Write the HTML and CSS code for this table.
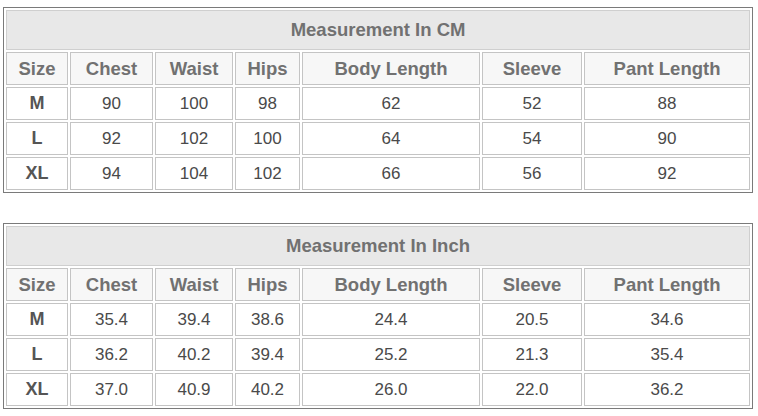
FILE: index.html
```html
<!DOCTYPE html>
<html>
<head>
<meta charset="utf-8">
<link rel="stylesheet" href="styles.css">
</head>
<body>
<div class="page">
<table class="size-table">
  <colgroup>
    <col class="c-size"><col class="c-chest"><col class="c-waist"><col class="c-hips"><col class="c-body"><col class="c-sleeve"><col class="c-pant">
  </colgroup>
  <tr><th class="title" colspan="7">Measurement In CM</th></tr>
  <tr class="head"><th>Size</th><th>Chest</th><th>Waist</th><th>Hips</th><th>Body Length</th><th>Sleeve</th><th>Pant Length</th></tr>
  <tr><th class="sz">M</th><td>90</td><td>100</td><td>98</td><td>62</td><td>52</td><td>88</td></tr>
  <tr><th class="sz">L</th><td>92</td><td>102</td><td>100</td><td>64</td><td>54</td><td>90</td></tr>
  <tr><th class="sz">XL</th><td>94</td><td>104</td><td>102</td><td>66</td><td>56</td><td>92</td></tr>
</table>
<table class="size-table">
  <colgroup>
    <col class="c-size"><col class="c-chest"><col class="c-waist"><col class="c-hips"><col class="c-body"><col class="c-sleeve"><col class="c-pant">
  </colgroup>
  <tr><th class="title" colspan="7">Measurement In Inch</th></tr>
  <tr class="head"><th>Size</th><th>Chest</th><th>Waist</th><th>Hips</th><th>Body Length</th><th>Sleeve</th><th>Pant Length</th></tr>
  <tr><th class="sz">M</th><td>35.4</td><td>39.4</td><td>38.6</td><td>24.4</td><td>20.5</td><td>34.6</td></tr>
  <tr><th class="sz">L</th><td>36.2</td><td>40.2</td><td>39.4</td><td>25.2</td><td>21.3</td><td>35.4</td></tr>
  <tr><th class="sz">XL</th><td>37.0</td><td>40.9</td><td>40.2</td><td>26.0</td><td>22.0</td><td>36.2</td></tr>
</table>
</div>
</body>
</html>
```
FILE: styles.css
```css
html, body {
  margin: 0;
  padding: 0;
  background: #ffffff;
}
.page {
  padding: 7px 0 0 3px;
  display: flex;
  flex-direction: column;
  gap: 30px;
}
.size-table {
  table-layout: fixed;
  width: 750px;
  border-collapse: separate;
  border-spacing: 2px;
  border: 1px solid #7a7a7a;
  font-family: "Liberation Sans", Arial, sans-serif;
}
.c-size { width: 62px; }
.c-chest { width: 83px; }
.c-waist { width: 78px; }
.c-hips { width: 65px; }
.c-body { width: 178px; }
.c-sleeve { width: 100px; }
.c-pant { width: 166px; }
.size-table th,
.size-table td {
  border: 1px solid #c4c4c4;
  padding: 0;
  text-align: center;
  box-sizing: border-box;
}
.size-table th {
  color: #717171;
  font-size: 18.5px;
  font-weight: bold;
}
.size-table td {
  color: #4a4a4a;
  font-size: 17px;
  font-weight: normal;
  height: 33px;
}
.size-table th.title {
  background: #e8e8e8;
  height: 40px;
  border-color: #cfcfcf;
}
.size-table .head th {
  background: #f7f7f7;
  height: 33px;
}
.size-table th.sz {
  color: #555555;
  background: #ffffff;
  height: 33px;
  font-size: 18px;
}
```
